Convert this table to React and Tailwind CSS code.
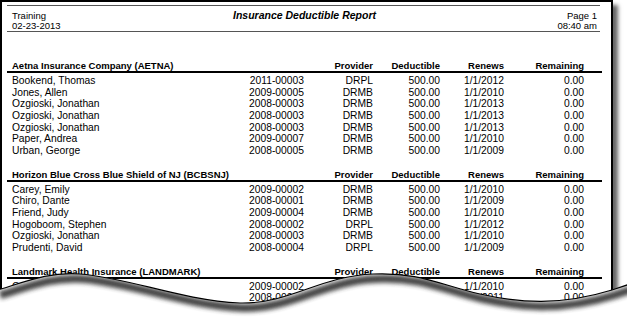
import React from 'react';

const groups = [
    {
        name: 'Aetna Insurance Company (AETNA)',
        rows: [
            ['Bookend, Thomas', '2011-00003', 'DRPL', '500.00', '1/1/2012', '0.00'],
            ['Jones, Allen', '2009-00005', 'DRMB', '500.00', '1/1/2010', '0.00'],
            ['Ozgioski, Jonathan', '2008-00003', 'DRMB', '500.00', '1/1/2013', '0.00'],
            ['Ozgioski, Jonathan', '2008-00003', 'DRMB', '500.00', '1/1/2013', '0.00'],
            ['Ozgioski, Jonathan', '2008-00003', 'DRMB', '500.00', '1/1/2013', '0.00'],
            ['Paper, Andrea', '2009-00007', 'DRMB', '500.00', '1/1/2010', '0.00'],
            ['Urban, George', '2008-00005', 'DRMB', '500.00', '1/1/2009', '0.00'],
        ],
    },
    {
        name: 'Horizon Blue Cross Blue Shield of NJ (BCBSNJ)',
        rows: [
            ['Carey, Emily', '2009-00002', 'DRMB', '500.00', '1/1/2010', '0.00'],
            ['Chiro, Dante', '2008-00001', 'DRMB', '500.00', '1/1/2009', '0.00'],
            ['Friend, Judy', '2009-00004', 'DRMB', '500.00', '1/1/2010', '0.00'],
            ['Hogoboom, Stephen', '2008-00002', 'DRPL', '500.00', '1/1/2012', '0.00'],
            ['Ozgioski, Jonathan', '2008-00003', 'DRMB', '500.00', '1/1/2010', '0.00'],
            ['Prudenti, David', '2008-00004', 'DRPL', '500.00', '1/1/2009', '0.00'],
        ],
    },
    {
        name: 'Landmark Health Insurance (LANDMARK)',
        rows: [
            ['Carey, Emily', '2009-00002', 'DRMB', '500.00', '1/1/2010', '0.00'],
            ['Chiro, Dante', '2008-00001', 'DRMB', '500.00', '1/1/2011', '0.00'],
        ],
    },
];

// name | id | provider | deductible | renews | remaining
const cols = 'grid grid-cols-[200px_92px_69px_67px_64px_80px] pl-[10px]';

const Group = ({ group, first }) => (
    <div className={first ? 'mt-[28px]' : 'mt-[12px]'}>
        <div className={`${cols} h-[11px] leading-[11px] text-[9.5px] font-bold`}>
            <span className="col-span-2 whitespace-nowrap">{group.name}</span>
            <span className="text-right">Provider</span>
            <span className="text-right">Deductible</span>
            <span className="text-right">Renews</span>
            <span className="text-right">Remaining</span>
        </div>
        <div className="ml-[5px] w-[595px] h-[2px] bg-black" />
        <div className="pt-[2px] text-[10.3px]">
            {group.rows.map((r, i) => (
                <div key={i} className={`${cols} h-[11.67px] leading-[11.67px]`}>
                    <span className="whitespace-nowrap">{r[0]}</span>
                    <span className="text-right">{r[1]}</span>
                    <span className="text-right">{r[2]}</span>
                    <span className="text-right">{r[3]}</span>
                    <span className="text-right">{r[4]}</span>
                    <span className="text-right">{r[5]}</span>
                </div>
            ))}
        </div>
    </div>
);

// torn paper bottom edge, drawn over the sheet
const wave = 'M-3,290 L1,289 C30,280 50,272 80,274 C130,278 180,300 240,303 C290,304 320,276 373,274 C420,272 440,285 480,294 C520,303 560,306 612,290 L630,284';
const below = `${wave} L630,330 L-3,330 Z`;

const TornEdge = () => (
    <svg className="absolute left-0 top-0 pointer-events-none" width="627" height="320" viewBox="0 0 627 320">
        <defs>
            <filter id="tear-blur" x="-10%" y="-50%" width="120%" height="200%">
                <feGaussianBlur stdDeviation="2" />
            </filter>
            <clipPath id="tear-below">
                <path d={below} />
            </clipPath>
        </defs>
        <path d={below} fill="#fff" />
        <g clipPath="url(#tear-below)">
            <path d={wave} transform="translate(3,5)" fill="none" stroke="#333" strokeWidth="8" filter="url(#tear-blur)" opacity="0.9" />
        </g>
        <path d={wave} fill="none" stroke="#000" strokeWidth="1.2" />
    </svg>
);

export default function App() {
    return (
        <div className="relative w-[627px] h-[320px] overflow-hidden bg-white text-black font-['Liberation_Sans',Arial,sans-serif]">
            <div className="w-[613px] h-[330px] border-2 border-black bg-white shadow-[5px_5px_4px_rgba(0,0,0,0.6)]">
                {/* page header */}
                <div className="ml-[5px] mt-[3px] w-[593px] h-px bg-[#555]" />
                <div className="ml-[5px] w-[593px] pt-[3.5px] pl-[5px] pr-[3px] text-[9.5px]">
                    <div className="grid grid-cols-[1fr_auto_1fr] items-center h-[11px] leading-[11px]">
                        <span>Training</span>
                        <span className="font-bold italic text-[10.5px]">Insurance Deductible Report</span>
                        <span className="text-right">Page 1</span>
                    </div>
                    <div className="flex justify-between h-[10.5px] leading-[10.5px]">
                        <span>02-23-2013</span>
                        <span>08:40 am</span>
                    </div>
                </div>
                <div className="ml-[5px] w-[593px] h-px bg-[#555]" />

                {groups.map((g, i) => (
                    <Group key={g.name} group={g} first={i === 0} />
                ))}
            </div>
            <TornEdge />
        </div>
    );
}
